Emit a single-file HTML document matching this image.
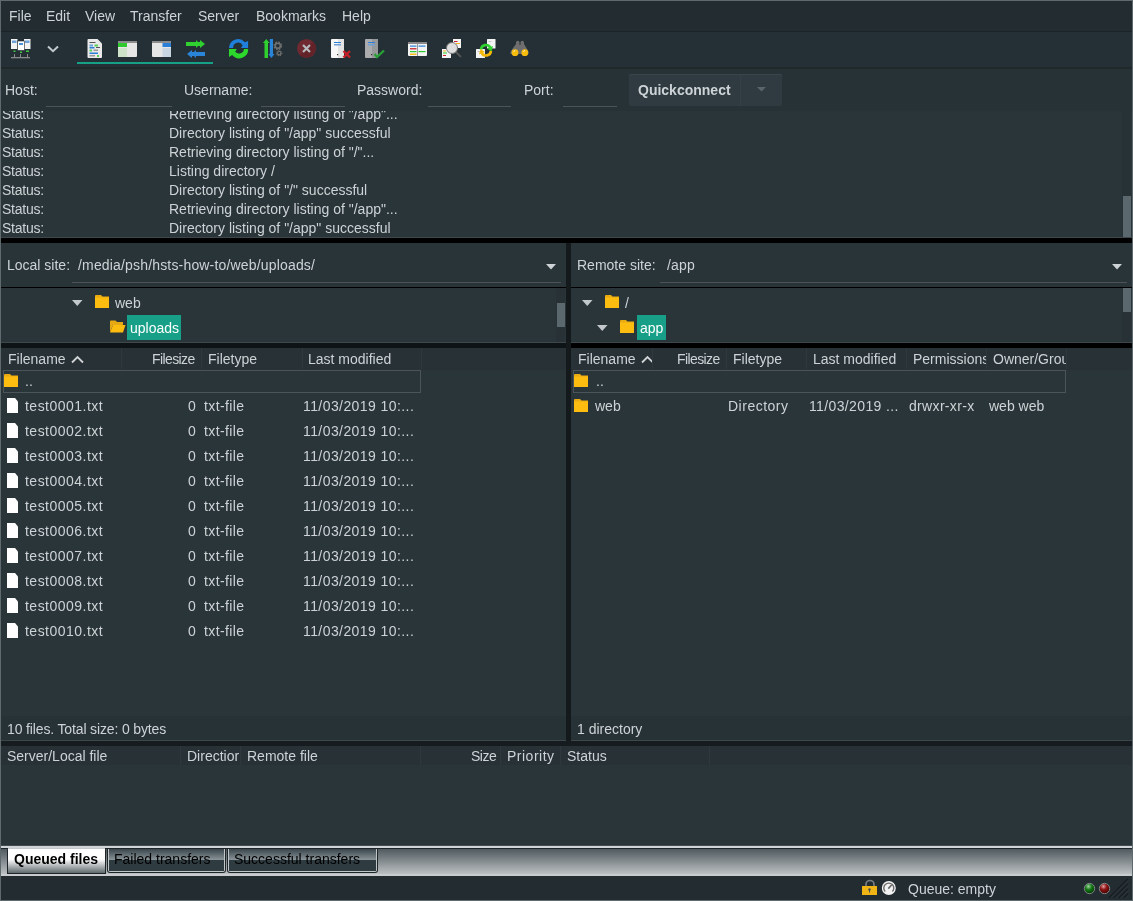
<!DOCTYPE html>
<html><head><meta charset="utf-8"><style>
html,body{margin:0;padding:0;width:1133px;height:901px;overflow:hidden;background:#232b30}
body{position:relative;font-family:"Liberation Sans",sans-serif;font-size:14px}
body div{position:absolute}
.t{line-height:16px;height:16px;white-space:pre;font-size:14px;color:#cdd3d6;will-change:transform}
</style></head><body>
<div style="left:0px;top:0px;width:1133px;height:901px;background:#5f6a6f;"></div>
<div style="left:1px;top:1px;width:1131px;height:30px;background:#222c31;"></div>
<div style="left:1px;top:31px;width:1131px;height:1px;background:#1c2327;"></div>
<div class="t" style="left:9px;top:8px;color:#cdd3d6;">File</div>
<div class="t" style="left:46px;top:8px;color:#cdd3d6;">Edit</div>
<div class="t" style="left:85px;top:8px;color:#cdd3d6;">View</div>
<div class="t" style="left:130px;top:8px;color:#cdd3d6;">Transfer</div>
<div class="t" style="left:198px;top:8px;color:#cdd3d6;">Server</div>
<div class="t" style="left:256px;top:8px;color:#cdd3d6;">Bookmarks</div>
<div class="t" style="left:342px;top:8px;color:#cdd3d6;">Help</div>
<div style="left:1px;top:32px;width:1131px;height:35px;background:#243035;"></div>
<div style="left:1px;top:67px;width:1131px;height:2px;background:#20282c;"></div>
<div style="left:77px;top:62px;width:136px;height:2px;background:#16a086;"></div>
<div style="left:1px;top:69px;width:1131px;height:42px;background:#273237;"></div>
<div class="t" style="left:5px;top:82px;color:#cdd3d6;">Host:</div>
<div style="left:46px;top:106px;width:126px;height:1px;background:#4a5459;"></div>
<div class="t" style="left:184px;top:82px;color:#cdd3d6;">Username:</div>
<div style="left:261px;top:106px;width:84px;height:1px;background:#4a5459;"></div>
<div class="t" style="left:357px;top:82px;color:#cdd3d6;">Password:</div>
<div style="left:428px;top:106px;width:83px;height:1px;background:#4a5459;"></div>
<div class="t" style="left:524px;top:82px;color:#cdd3d6;">Port:</div>
<div style="left:563px;top:106px;width:54px;height:1px;background:#4a5459;"></div>
<div style="left:629px;top:74px;width:153px;height:32px;background:#2f3b41;border-radius:2px;box-shadow:inset 0 1px 0 #38454b"></div>
<div style="left:740px;top:75px;width:1px;height:31px;background:#344147;"></div>
<div class="t" style="left:638px;top:82px;color:#cdd3d6;font-weight:bold">Quickconnect</div>
<svg style="position:absolute;left:757px;top:87px" width="10" height="5"><path d="M0 0H9L4.5 4.5Z" fill="#5a6469"/></svg>
<div style="left:1px;top:111px;width:1131px;height:126px;background:#2a3539;"></div>
<div style="left:1122px;top:111px;width:9px;height:126px;background:#273237;"></div>
<div style="left:1123px;top:196px;width:8px;height:41px;background:#5b686d;"></div>
<div style="left:1px;top:111px;width:1121px;height:126px;overflow:hidden">
<div class="t" style="left:1px;top:-5px;letter-spacing:-0.25px">Status:</div><div class="t" style="left:168px;top:-5px">Retrieving directory listing of &quot;/app&quot;...</div>
<div class="t" style="left:1px;top:14px;letter-spacing:-0.25px">Status:</div><div class="t" style="left:168px;top:14px">Directory listing of &quot;/app&quot; successful</div>
<div class="t" style="left:1px;top:33px;letter-spacing:-0.25px">Status:</div><div class="t" style="left:168px;top:33px">Retrieving directory listing of &quot;/&quot;...</div>
<div class="t" style="left:1px;top:52px;letter-spacing:-0.25px">Status:</div><div class="t" style="left:168px;top:52px">Listing directory /</div>
<div class="t" style="left:1px;top:71px;letter-spacing:-0.25px">Status:</div><div class="t" style="left:168px;top:71px">Directory listing of &quot;/&quot; successful</div>
<div class="t" style="left:1px;top:90px;letter-spacing:-0.25px">Status:</div><div class="t" style="left:168px;top:90px">Retrieving directory listing of &quot;/app&quot;...</div>
<div class="t" style="left:1px;top:109px;letter-spacing:-0.25px">Status:</div><div class="t" style="left:168px;top:109px">Directory listing of &quot;/app&quot; successful</div>
</div>
<div style="left:1px;top:237px;width:1131px;height:1px;background:#3d474c;"></div>
<div style="left:1px;top:238px;width:1131px;height:5px;background:#000;"></div>
<div style="left:566px;top:243px;width:5px;height:502px;background:#141a1c;"></div>
<div style="left:1px;top:243px;width:565px;height:44px;background:#293438;"></div>
<div class="t" style="left:7px;top:257px;color:#cdd3d6;">Local site:</div>
<div class="t" style="left:78px;top:257px;color:#cdd3d6;letter-spacing:0.17px">/media/psh/hsts-how-to/web/uploads/</div>
<div style="left:72px;top:282px;width:489px;height:1px;background:#4a5459;"></div>
<svg style="position:absolute;left:546px;top:264px" width="11" height="6"><path d="M0 0H10L5 5.5Z" fill="#cdd3d6"/></svg>
<div style="left:1px;top:287px;width:565px;height:1px;background:#000;"></div>
<div style="left:1px;top:288px;width:565px;height:54px;background:#2a3539;"></div>
<div style="left:1px;top:342px;width:565px;height:1px;background:#3d474c;"></div>
<div style="left:1px;top:343px;width:565px;height:5px;background:#0e1315;"></div>
<div style="left:1px;top:348px;width:565px;height:22px;background:#273136;"></div>
<div style="left:1px;top:370px;width:565px;height:346px;background:#2a3539;"></div>
<div style="left:1px;top:716px;width:565px;height:24px;background:#273236;"></div>
<div style="left:1px;top:740px;width:565px;height:1px;background:#3d474c;"></div>
<div style="left:571px;top:243px;width:561px;height:44px;background:#293438;"></div>
<div class="t" style="left:577px;top:257px;color:#cdd3d6;">Remote site:</div>
<div class="t" style="left:667px;top:257px;color:#cdd3d6;letter-spacing:0.17px">/app</div>
<div style="left:660px;top:282px;width:467px;height:1px;background:#4a5459;"></div>
<svg style="position:absolute;left:1112px;top:264px" width="11" height="6"><path d="M0 0H10L5 5.5Z" fill="#cdd3d6"/></svg>
<div style="left:571px;top:287px;width:561px;height:1px;background:#000;"></div>
<div style="left:571px;top:288px;width:561px;height:54px;background:#2a3539;"></div>
<div style="left:571px;top:342px;width:561px;height:1px;background:#3d474c;"></div>
<div style="left:571px;top:343px;width:561px;height:5px;background:#000;"></div>
<div style="left:571px;top:348px;width:561px;height:22px;background:#273136;"></div>
<div style="left:571px;top:370px;width:561px;height:346px;background:#2a3539;"></div>
<div style="left:571px;top:716px;width:561px;height:24px;background:#273236;"></div>
<div style="left:571px;top:740px;width:561px;height:1px;background:#3d474c;"></div>
<div style="left:1px;top:741px;width:1131px;height:4px;background:#151b1e;"></div>
<div style="left:556px;top:288px;width:9px;height:54px;background:#273136;"></div>
<div style="left:557px;top:303px;width:8px;height:24px;background:#5b686d;"></div>
<svg style="position:absolute;left:72px;top:300px" width="11" height="7"><path d="M0 0H10.5L5.25 6Z" fill="#c2c8cc"/></svg>
<svg style="position:absolute;left:95px;top:295px" width="15" height="14"><path d="M0 1Q0 0 1 0H6L7.5 1.5H14V13H0Z" fill="#e9ab12"/><rect x="0" y="2.5" width="14" height="10.5" fill="#fdbd10"/></svg>
<div class="t" style="left:115px;top:295px;color:#cdd3d6;">web</div>
<svg style="position:absolute;left:110px;top:320px" width="16" height="13"><path d="M0 1.5Q0 0.5 1 0.5H5.5L7 2H13V5H3L0 12Z" fill="#e6a913"/><path d="M3 5H15.5L13 12.5H0Z" fill="#fdbd10"/></svg>
<div style="left:127px;top:315px;width:54px;height:25px;background:#17a087;"></div>
<div class="t" style="left:130px;top:320px;color:#ffffff;">uploads</div>
<div style="left:1122px;top:288px;width:9px;height:54px;background:#273136;"></div>
<div style="left:1123px;top:288px;width:8px;height:24px;background:#5b686d;"></div>
<svg style="position:absolute;left:582px;top:300px" width="11" height="7"><path d="M0 0H10.5L5.25 6Z" fill="#c2c8cc"/></svg>
<svg style="position:absolute;left:605px;top:295px" width="15" height="14"><path d="M0 1Q0 0 1 0H6L7.5 1.5H14V13H0Z" fill="#e9ab12"/><rect x="0" y="2.5" width="14" height="10.5" fill="#fdbd10"/></svg>
<div class="t" style="left:625px;top:295px;color:#cdd3d6;">/</div>
<svg style="position:absolute;left:597px;top:325px" width="11" height="7"><path d="M0 0H10.5L5.25 6Z" fill="#c2c8cc"/></svg>
<svg style="position:absolute;left:620px;top:320px" width="15" height="14"><path d="M0 1Q0 0 1 0H6L7.5 1.5H14V13H0Z" fill="#e9ab12"/><rect x="0" y="2.5" width="14" height="10.5" fill="#fdbd10"/></svg>
<div style="left:637px;top:315px;width:29px;height:25px;background:#17a087;"></div>
<div class="t" style="left:640px;top:320px;color:#ffffff;">app</div>
<div class="t" style="left:8px;top:351px;color:#cdd3d6;">Filename</div>
<svg style="position:absolute;left:71px;top:355px" width="14" height="9"><path d="M1 7.5L6.5 2L12 7.5" stroke="#d0d4d6" stroke-width="1.8" fill="none"/></svg>
<div style="left:121px;top:348px;width:1px;height:21px;background:#2e383d;"></div>
<div style="left:201px;top:348px;width:1px;height:21px;background:#2e383d;"></div>
<div class="t" style="left:152px;top:351px;color:#cdd3d6;letter-spacing:-0.6px">Filesize</div>
<div class="t" style="left:208px;top:351px;color:#cdd3d6;">Filetype</div>
<div style="left:302px;top:348px;width:1px;height:21px;background:#2e383d;"></div>
<div class="t" style="left:308px;top:351px;color:#cdd3d6;">Last modified</div>
<div style="left:421px;top:348px;width:1px;height:21px;background:#2e383d;"></div>
<div class="t" style="left:578px;top:351px;color:#cdd3d6;">Filename</div>
<svg style="position:absolute;left:641px;top:355px" width="11" height="9"><path d="M1 7.5L6.5 2L12 7.5" stroke="#d0d4d6" stroke-width="1.8" fill="none"/></svg>
<div style="left:652px;top:348px;width:1px;height:21px;background:#2e383d;"></div>
<div class="t" style="left:677px;top:351px;color:#cdd3d6;letter-spacing:-0.6px">Filesize</div>
<div style="left:726px;top:348px;width:1px;height:21px;background:#2e383d;"></div>
<div class="t" style="left:733px;top:351px;color:#cdd3d6;">Filetype</div>
<div style="left:806px;top:348px;width:1px;height:21px;background:#2e383d;"></div>
<div class="t" style="left:813px;top:351px;color:#cdd3d6;">Last modified</div>
<div style="left:906px;top:348px;width:1px;height:21px;background:#2e383d;"></div>
<div class="t" style="left:913px;top:351px;color:#cdd3d6;width:73px;overflow:hidden">Permissions</div>
<div style="left:986px;top:348px;width:1px;height:21px;background:#2e383d;"></div>
<div class="t" style="left:993px;top:351px;color:#cdd3d6;width:73px;overflow:hidden">Owner/Grou</div>
<div style="left:1066px;top:348px;width:1px;height:21px;background:#2e383d;"></div>
<div style="left:3px;top:370px;width:418px;height:23px;background:#4a5459;"></div>
<div style="left:4px;top:371px;width:416px;height:21px;background:#2a3539;"></div>
<svg style="position:absolute;left:4px;top:374px" width="15" height="14"><path d="M0 1Q0 0 1 0H6L7.5 1.5H14V13H0Z" fill="#e9ab12"/><rect x="0" y="2.5" width="14" height="10.5" fill="#fdbd10"/></svg>
<div class="t" style="left:25px;top:373px;color:#cdd3d6;">..</div>
<div style="left:573px;top:370px;width:493px;height:23px;background:#4a5459;"></div>
<div style="left:574px;top:371px;width:491px;height:21px;background:#2a3539;"></div>
<svg style="position:absolute;left:574px;top:374px" width="15" height="14"><path d="M0 1Q0 0 1 0H6L7.5 1.5H14V13H0Z" fill="#e9ab12"/><rect x="0" y="2.5" width="14" height="10.5" fill="#fdbd10"/></svg>
<div class="t" style="left:596px;top:373px;color:#cdd3d6;">..</div>
<svg style="position:absolute;left:7px;top:398px" width="12" height="15"><path d="M0 0H8L11 3.5V15H0Z" fill="#ffffff"/></svg>
<div class="t" style="left:25px;top:398px;color:#cdd3d6;letter-spacing:0.48px">test0001.txt</div>
<div class="t" style="left:188px;top:398px;color:#cdd3d6;">0</div>
<div class="t" style="left:204px;top:398px;color:#cdd3d6;letter-spacing:0.37px">txt-file</div>
<div class="t" style="left:303px;top:398px;color:#cdd3d6;letter-spacing:0.42px">11/03/2019 10:...</div>
<svg style="position:absolute;left:7px;top:423px" width="12" height="15"><path d="M0 0H8L11 3.5V15H0Z" fill="#ffffff"/></svg>
<div class="t" style="left:25px;top:423px;color:#cdd3d6;letter-spacing:0.48px">test0002.txt</div>
<div class="t" style="left:188px;top:423px;color:#cdd3d6;">0</div>
<div class="t" style="left:204px;top:423px;color:#cdd3d6;letter-spacing:0.37px">txt-file</div>
<div class="t" style="left:303px;top:423px;color:#cdd3d6;letter-spacing:0.42px">11/03/2019 10:...</div>
<svg style="position:absolute;left:7px;top:448px" width="12" height="15"><path d="M0 0H8L11 3.5V15H0Z" fill="#ffffff"/></svg>
<div class="t" style="left:25px;top:448px;color:#cdd3d6;letter-spacing:0.48px">test0003.txt</div>
<div class="t" style="left:188px;top:448px;color:#cdd3d6;">0</div>
<div class="t" style="left:204px;top:448px;color:#cdd3d6;letter-spacing:0.37px">txt-file</div>
<div class="t" style="left:303px;top:448px;color:#cdd3d6;letter-spacing:0.42px">11/03/2019 10:...</div>
<svg style="position:absolute;left:7px;top:473px" width="12" height="15"><path d="M0 0H8L11 3.5V15H0Z" fill="#ffffff"/></svg>
<div class="t" style="left:25px;top:473px;color:#cdd3d6;letter-spacing:0.48px">test0004.txt</div>
<div class="t" style="left:188px;top:473px;color:#cdd3d6;">0</div>
<div class="t" style="left:204px;top:473px;color:#cdd3d6;letter-spacing:0.37px">txt-file</div>
<div class="t" style="left:303px;top:473px;color:#cdd3d6;letter-spacing:0.42px">11/03/2019 10:...</div>
<svg style="position:absolute;left:7px;top:498px" width="12" height="15"><path d="M0 0H8L11 3.5V15H0Z" fill="#ffffff"/></svg>
<div class="t" style="left:25px;top:498px;color:#cdd3d6;letter-spacing:0.48px">test0005.txt</div>
<div class="t" style="left:188px;top:498px;color:#cdd3d6;">0</div>
<div class="t" style="left:204px;top:498px;color:#cdd3d6;letter-spacing:0.37px">txt-file</div>
<div class="t" style="left:303px;top:498px;color:#cdd3d6;letter-spacing:0.42px">11/03/2019 10:...</div>
<svg style="position:absolute;left:7px;top:523px" width="12" height="15"><path d="M0 0H8L11 3.5V15H0Z" fill="#ffffff"/></svg>
<div class="t" style="left:25px;top:523px;color:#cdd3d6;letter-spacing:0.48px">test0006.txt</div>
<div class="t" style="left:188px;top:523px;color:#cdd3d6;">0</div>
<div class="t" style="left:204px;top:523px;color:#cdd3d6;letter-spacing:0.37px">txt-file</div>
<div class="t" style="left:303px;top:523px;color:#cdd3d6;letter-spacing:0.42px">11/03/2019 10:...</div>
<svg style="position:absolute;left:7px;top:548px" width="12" height="15"><path d="M0 0H8L11 3.5V15H0Z" fill="#ffffff"/></svg>
<div class="t" style="left:25px;top:548px;color:#cdd3d6;letter-spacing:0.48px">test0007.txt</div>
<div class="t" style="left:188px;top:548px;color:#cdd3d6;">0</div>
<div class="t" style="left:204px;top:548px;color:#cdd3d6;letter-spacing:0.37px">txt-file</div>
<div class="t" style="left:303px;top:548px;color:#cdd3d6;letter-spacing:0.42px">11/03/2019 10:...</div>
<svg style="position:absolute;left:7px;top:573px" width="12" height="15"><path d="M0 0H8L11 3.5V15H0Z" fill="#ffffff"/></svg>
<div class="t" style="left:25px;top:573px;color:#cdd3d6;letter-spacing:0.48px">test0008.txt</div>
<div class="t" style="left:188px;top:573px;color:#cdd3d6;">0</div>
<div class="t" style="left:204px;top:573px;color:#cdd3d6;letter-spacing:0.37px">txt-file</div>
<div class="t" style="left:303px;top:573px;color:#cdd3d6;letter-spacing:0.42px">11/03/2019 10:...</div>
<svg style="position:absolute;left:7px;top:598px" width="12" height="15"><path d="M0 0H8L11 3.5V15H0Z" fill="#ffffff"/></svg>
<div class="t" style="left:25px;top:598px;color:#cdd3d6;letter-spacing:0.48px">test0009.txt</div>
<div class="t" style="left:188px;top:598px;color:#cdd3d6;">0</div>
<div class="t" style="left:204px;top:598px;color:#cdd3d6;letter-spacing:0.37px">txt-file</div>
<div class="t" style="left:303px;top:598px;color:#cdd3d6;letter-spacing:0.42px">11/03/2019 10:...</div>
<svg style="position:absolute;left:7px;top:623px" width="12" height="15"><path d="M0 0H8L11 3.5V15H0Z" fill="#ffffff"/></svg>
<div class="t" style="left:25px;top:623px;color:#cdd3d6;letter-spacing:0.48px">test0010.txt</div>
<div class="t" style="left:188px;top:623px;color:#cdd3d6;">0</div>
<div class="t" style="left:204px;top:623px;color:#cdd3d6;letter-spacing:0.37px">txt-file</div>
<div class="t" style="left:303px;top:623px;color:#cdd3d6;letter-spacing:0.42px">11/03/2019 10:...</div>
<svg style="position:absolute;left:574px;top:399px" width="15" height="14"><path d="M0 1Q0 0 1 0H6L7.5 1.5H14V13H0Z" fill="#e9ab12"/><rect x="0" y="2.5" width="14" height="10.5" fill="#fdbd10"/></svg>
<div class="t" style="left:595px;top:398px;color:#cdd3d6;">web</div>
<div class="t" style="left:728px;top:398px;color:#cdd3d6;letter-spacing:0.5px">Directory</div>
<div class="t" style="left:809px;top:398px;color:#cdd3d6;letter-spacing:0.37px">11/03/2019 ...</div>
<div class="t" style="left:909px;top:398px;color:#cdd3d6;letter-spacing:0.33px">drwxr-xr-x</div>
<div class="t" style="left:989px;top:398px;color:#cdd3d6;">web web</div>
<div class="t" style="left:7px;top:721px;color:#cdd3d6;letter-spacing:-0.14px">10 files. Total size: 0 bytes</div>
<div class="t" style="left:577px;top:721px;color:#cdd3d6;">1 directory</div>
<div style="left:1px;top:745px;width:1131px;height:1px;background:#151b1e;"></div>
<div style="left:1px;top:746px;width:1131px;height:19px;background:#273136;"></div>
<div style="left:180px;top:746px;width:1px;height:19px;background:#2e383d;"></div>
<div style="left:240px;top:746px;width:1px;height:19px;background:#2e383d;"></div>
<div style="left:420px;top:746px;width:1px;height:19px;background:#2e383d;"></div>
<div style="left:500px;top:746px;width:1px;height:19px;background:#2e383d;"></div>
<div style="left:560px;top:746px;width:1px;height:19px;background:#2e383d;"></div>
<div style="left:709px;top:746px;width:1px;height:19px;background:#2e383d;"></div>
<div class="t" style="left:7px;top:748px;color:#cdd3d6;">Server/Local file</div>
<div class="t" style="left:187px;top:748px;color:#cdd3d6;width:53px;overflow:hidden">Directior</div>
<div class="t" style="left:247px;top:748px;color:#cdd3d6;">Remote file</div>
<div class="t" style="left:471px;top:748px;color:#cdd3d6;letter-spacing:-0.5px">Size</div>
<div class="t" style="left:507px;top:748px;color:#cdd3d6;letter-spacing:0.5px">Priority</div>
<div class="t" style="left:567px;top:748px;color:#cdd3d6;">Status</div>
<div style="left:1px;top:765px;width:1131px;height:80px;background:#2a3539;"></div>
<div style="left:1px;top:845px;width:1131px;height:31px;background:linear-gradient(#3f4a50,#c4c8ca);"></div>
<div style="left:1px;top:846px;width:1131px;height:2px;background:#d0d4d6;"></div>
<div style="left:1px;top:848px;width:1131px;height:1px;background:#1e2528;"></div>
<div style="left:1px;top:874px;width:1131px;height:2px;background:#c8ccce;"></div>
<div style="left:7px;top:848px;width:99px;height:26px;background:#1e2528;border-radius:3px 3px 0 0"></div>
<div style="left:8px;top:848px;width:97px;height:1px;background:#c4c8ca;"></div>
<div style="left:8px;top:849px;width:97px;height:24px;background:linear-gradient(#ffffff 0%,#ffffff 42%,#5f696d 100%);border-radius:0"></div>
<div class="t" style="left:14px;top:851px;color:#000;font-weight:bold">Queued files</div>
<div style="left:107px;top:848px;width:119px;height:25px;background:#1e2528;border-radius:0 0 3px 3px"></div>
<div style="left:108px;top:849px;width:117px;height:23px;background:#c0c5c8;border-radius:0 0 2px 2px"></div>
<div style="left:109px;top:849px;width:115px;height:11px;background:linear-gradient(#3a464c,#8a9499);"></div>
<div style="left:109px;top:860px;width:115px;height:11px;background:#2e3b41;"></div>
<div class="t" style="left:114px;top:851px;color:#000;">Failed transfers</div>
<div style="left:227px;top:848px;width:151px;height:25px;background:#1e2528;border-radius:0 0 3px 3px"></div>
<div style="left:228px;top:849px;width:149px;height:23px;background:#c0c5c8;border-radius:0 0 2px 2px"></div>
<div style="left:229px;top:849px;width:147px;height:11px;background:linear-gradient(#3a464c,#8a9499);"></div>
<div style="left:229px;top:860px;width:147px;height:11px;background:#2e3b41;"></div>
<div class="t" style="left:234px;top:851px;color:#000;">Successful transfers</div>
<div style="left:1px;top:876px;width:1131px;height:24px;background:#232c31;"></div>
<div class="t" style="left:908px;top:881px;color:#cdd3d6;">Queue: empty</div>
<svg style="position:absolute;left:0;top:0" width="560" height="70">
<!-- site manager -->
<g>
<rect x="11" y="39" width="6.5" height="10" fill="#f2f2f2"/>
<rect x="12" y="40.5" width="4.5" height="2.5" fill="#6fa0d8"/>
<rect x="24" y="39" width="6.5" height="10" fill="#f2f2f2"/>
<rect x="25" y="40.5" width="4.5" height="2.5" fill="#6fa0d8"/>
<rect x="17.5" y="41" width="7" height="9.5" fill="#ffffff" stroke="#1d2427" stroke-width="0.6"/>
<rect x="19" y="43" width="4" height="2" fill="#4a90d9"/>
<rect x="13.5" y="50.5" width="2" height="1.5" fill="#3ec93e"/>
<rect x="20" y="51.5" width="2" height="1.5" fill="#3ec93e"/>
<rect x="26" y="50.5" width="3" height="1.5" fill="#3ec93e"/>
<rect x="11" y="57" width="19" height="1.3" fill="#8a8a8a"/>
<rect x="14" y="54" width="1" height="3" fill="#8a8a8a"/>
<rect x="20" y="54" width="1" height="3" fill="#8a8a8a"/>
<rect x="27" y="54" width="1" height="3" fill="#8a8a8a"/>
</g>
<path d="M48 46.5L53 51.2L58 46.5" stroke="#c3cacd" stroke-width="2" fill="none"/>
<!-- doc -->
<path d="M87.5 40Q87.5 39 88.5 39H97.5L102 43.5V57Q102 58 101 58H88.5Q87.5 58 87.5 57Z" fill="#e9e9e9"/>
<rect x="89.5" y="42" width="6" height="1" fill="#555"/>
<rect x="89.5" y="44.5" width="3.5" height="2" fill="#6aa2dd"/>
<rect x="94.5" y="44.5" width="3.5" height="2" fill="#5bd05b"/>
<rect x="89.5" y="47" width="5" height="1.5" fill="#2c7fd6"/>
<rect x="96" y="47" width="4" height="1" fill="#555"/>
<rect x="89.5" y="49.5" width="2.5" height="2" fill="#5bd05b"/>
<rect x="93.5" y="49.5" width="4.5" height="1.5" fill="#999"/>
<rect x="89.5" y="52.5" width="8.5" height="1.5" fill="#2c7fd6"/>
<rect x="89.5" y="55" width="5.5" height="1.5" fill="#999"/>
<rect x="97" y="55" width="2" height="2" fill="#5bd05b"/>
<!-- window local -->
<rect x="118" y="41" width="19" height="16" rx="1" fill="#e6e6e6"/>
<rect x="118" y="41" width="19" height="2" fill="#8c8c8c"/>
<rect x="118" y="43" width="9" height="4" fill="#2fc92f"/>
<rect x="118" y="48" width="9" height="9" fill="#cde2c9"/>
<!-- window remote -->
<rect x="152" y="41" width="19" height="16" rx="1" fill="#e6e6e6"/>
<rect x="152" y="41" width="19" height="2" fill="#8c8c8c"/>
<rect x="162.5" y="43" width="8.5" height="4" fill="#2a7fd8"/>
<rect x="162.5" y="48" width="8.5" height="9" fill="#c9d6e2"/>
<!-- transfer arrows -->
<path d="M186 42H196V40L200 44L196 48V46H186Z" fill="#2fd02f"/>
<path d="M196 42H200V40L205 44L200 48V46H196Z" fill="#2fd02f"/>
<path d="M205 52H196V50L192 54L196 58V56H205Z" fill="#2a84d8"/>
<path d="M196 52H192V50L187 54L192 58V56H196Z" fill="#2a84d8"/>
<!-- refresh -->
<path d="M229 48A9 9 0 0 1 244.8 42.2L248.1 40.9L248.1 48L241 48L242.7 45.5A5 5 0 0 0 233.2 48Z" fill="#1f80dc"/>
<path d="M248.2 49A9 9 0 0 1 232.2 55L229 57.1L229 49L236.8 49L235.2 51.7A5 5 0 0 0 244 49Z" fill="#2bd82b"/>
<!-- process queue arrows + gears -->
<path d="M264.5 58V43H263L266.3 39L269.5 43H268V58Z" fill="#2fd02f"/>
<path d="M269.8 39H273V54H274.5L271.4 58L268.3 54H269.8Z" fill="#2a84d8"/>
<circle cx="277.8" cy="45.8" r="2.6" fill="none" stroke="#6f6f6f" stroke-width="1.6"/>
<circle cx="277.8" cy="45.8" r="3.7" fill="none" stroke="#6f6f6f" stroke-width="1.4" stroke-dasharray="1.6 1.3"/>
<circle cx="279.2" cy="53.2" r="1.7" fill="none" stroke="#6f6f6f" stroke-width="1.2"/>
<circle cx="279.2" cy="53.2" r="2.6" fill="none" stroke="#6f6f6f" stroke-width="1.1" stroke-dasharray="1.2 1"/>
<!-- cancel -->
<circle cx="306.5" cy="48.5" r="9.5" fill="#6f2a31"/><path d="M313.2 41.8A9.5 9.5 0 0 1 299.8 55.2Z" fill="#632228"/>
<path d="M303 45L310 52M310 45L303 52" stroke="#b5b9bb" stroke-width="2.2"/>
<!-- disconnect -->
<rect x="331" y="39" width="13" height="19" rx="1" fill="#f7f7f7"/>
<rect x="338" y="39" width="6" height="19" fill="#e3e3e3"/>
<rect x="334" y="42" width="7" height="1" fill="#2a7fd8"/>
<rect x="334" y="44" width="7" height="1.5" fill="#6fa0d8"/>
<rect x="337" y="54" width="1.2" height="1.2" fill="#333"/>
<path d="M343.5 51L350 57.5M350 51L343.5 57.5" stroke="#c81e26" stroke-width="2.4"/>
<!-- reconnect -->
<rect x="365" y="39" width="13" height="19" rx="1" fill="#a9abad"/>
<rect x="372" y="39" width="6" height="19" fill="#969899"/>
<rect x="368" y="42" width="7" height="1" fill="#2a7fd8"/>
<rect x="368" y="44" width="7" height="1.5" fill="#6fa0d8"/>
<rect x="371" y="54" width="1.2" height="1.2" fill="#333"/>
<path d="M374.5 54L377 57L384 50.5" stroke="#27a035" stroke-width="2.3" fill="none"/>
<!-- filter -->
<rect x="408" y="42" width="19" height="14" rx="1" fill="#f4f4f4"/>
<rect x="408" y="42" width="19" height="2" fill="#888"/>
<rect x="417" y="44" width="1" height="12" fill="#999"/>
<rect x="410" y="45.5" width="6.5" height="1.2" fill="#2a7fd8"/>
<rect x="418.5" y="45.5" width="7" height="1.2" fill="#2a7fd8"/>
<rect x="410" y="48" width="6.5" height="1.5" fill="#c9404a"/>
<rect x="410" y="51" width="6.5" height="1.2" fill="#2fc92f"/>
<rect x="418.5" y="51" width="7" height="1.2" fill="#2fc92f"/>
<rect x="410" y="53.5" width="6.5" height="1.5" fill="#f5c01a"/>
<!-- compare -->
<rect x="453" y="39" width="8" height="9" fill="#f4f4f4"/>
<rect x="454" y="41" width="3.5" height="1" fill="#c9202a"/>
<rect x="456" y="43" width="4" height="1" fill="#f5b01a"/>
<rect x="442" y="49" width="9" height="9" fill="#f4f4f4"/>
<rect x="443" y="50.5" width="3" height="1" fill="#f5b01a"/>
<rect x="443" y="52.5" width="4" height="1" fill="#2fc92f"/>
<rect x="443" y="55" width="3" height="1" fill="#c9202a"/>
<path d="M455 51L461 57" stroke="#555" stroke-width="2"/>
<circle cx="452" cy="48" r="5.5" fill="#dedede" stroke="#777" stroke-width="1"/>
<!-- sync browse -->
<rect x="487" y="39" width="8.5" height="9.5" rx="0.5" fill="#f4f4f4"/>
<rect x="488.5" y="41" width="3" height="0.8" fill="#bbb"/>
<rect x="476" y="49" width="9" height="9" rx="0.5" fill="#f4f4f4"/>
<rect x="477.5" y="51" width="3" height="0.8" fill="#bbb"/>
<path d="M481 49.5A5 5 0 0 1 490.3 47.5" stroke="#2fd02f" stroke-width="2.6" fill="none"/>
<path d="M493 46L491.5 51.5L487 48.5Z" fill="#2fd02f"/>
<path d="M491 51A5 5 0 0 1 481.7 53" stroke="#f5b80a" stroke-width="2.6" fill="none"/>
<path d="M479 54.5L480.5 49L485 52Z" fill="#f5b80a"/>
<!-- binoculars -->
<path d="M517.8 40.8Q519.5 40.8 519.5 42.5V45H520.5V42.5Q520.5 40.8 522.2 40.8Q524 40.8 524 42.5V44L528.5 51.5V54H510.5V51.5L516 44V42.5Q516 40.8 517.8 40.8Z" fill="#6e6e6e"/>
<circle cx="515" cy="52.7" r="3.4" fill="#f8bd0c"/>
<circle cx="524.8" cy="52.7" r="3.4" fill="#f8bd0c"/>
<path d="M513.6 51.6L515.2 50.3" stroke="#fff" stroke-width="0.9"/>
<path d="M523.4 51.6L525 50.3" stroke="#fff" stroke-width="0.9"/>
</svg>
<svg style="position:absolute;left:850px;top:876px" width="283" height="24">
<path d="M866 886V884.5A4 4 0 0 1 874 884.5V886" transform="translate(-850,-876)" stroke="#7b8083" stroke-width="1.6" fill="none"/>
<rect x="12" y="10" width="15" height="9" fill="#f0b414"/>
<circle cx="19.5" cy="13.5" r="1.2" fill="#4a4f55"/><rect x="19" y="13.5" width="1" height="3" fill="#4a4f55"/>
<circle cx="38.8" cy="12" r="7" fill="#f2f2f2"/>
<path d="M35.2 15.6A5 5 0 1 1 42.4 15.6" stroke="#6a6a6a" stroke-width="1.4" fill="none"/>
<path d="M38.3 12.6L41.6 9" stroke="#6a6a6a" stroke-width="1.6"/>
<defs><radialGradient id="gg" cx="0.4" cy="0.3" r="0.7"><stop offset="0" stop-color="#a0d8a0"/><stop offset="0.45" stop-color="#187a18"/><stop offset="1" stop-color="#003a00"/></radialGradient>
<radialGradient id="rg" cx="0.4" cy="0.3" r="0.7"><stop offset="0" stop-color="#e8a0a0"/><stop offset="0.45" stop-color="#8a1414"/><stop offset="1" stop-color="#480000"/></radialGradient></defs>
<circle cx="239.5" cy="12.5" r="5.2" fill="url(#gg)" stroke="#80858a" stroke-width="1"/>
<circle cx="254.5" cy="12.5" r="5.2" fill="url(#rg)" stroke="#80858a" stroke-width="1"/>
<path d="M259 22L278 3M264 22L278 8M269 22L278 13M274 22L278 18" stroke="#151b1e" stroke-width="1.3"/><path d="M260 22.5L278.5 4M265 22.5L278.5 9M270 22.5L278.5 14M275 22.5L278.5 19" stroke="#34424a" stroke-width="0.7"/>
</svg>
</body></html>
